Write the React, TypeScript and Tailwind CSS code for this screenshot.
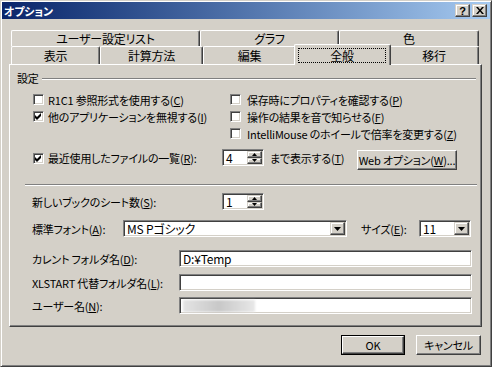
import React from "react";

const sunken =
  "border border-t-[#808080] border-l-[#808080] border-b-white border-r-white shadow-[inset_1px_1px_0_#404040,inset_-1px_-1px_0_#d4d0c8]";
const raised =
  "border border-t-white border-l-white border-b-[#404040] border-r-[#404040] shadow-[inset_-1px_-1px_0_#808080,inset_1px_1px_0_#d4d0c8]";
const raisedSmall =
  "border border-t-[#d4d0c8] border-l-[#d4d0c8] border-b-[#404040] border-r-[#404040] shadow-[inset_-1px_-1px_0_#808080,inset_1px_1px_0_#ffffff]";

function Check({ checked }: { checked?: boolean }) {
  return (
    <div className={`w-[11px] h-[11px] bg-white ${sunken} flex items-center justify-center shrink-0`}>
      {checked && (
        <svg width="7" height="7" viewBox="0 0 7 7">
          <path d="M0 2 L2 4 L6 0 L6 3 L2 7 L0 5 Z" fill="black" />
        </svg>
      )}
    </div>
  );
}

function Up() {
  return (
    <svg width="5" height="3" viewBox="0 0 5 3">
      <path d="M2.5 0 L5 3 L0 3 Z" fill="black" />
    </svg>
  );
}
function Down() {
  return (
    <svg width="5" height="3" viewBox="0 0 5 3">
      <path d="M0 0 L5 0 L2.5 3 Z" fill="black" />
    </svg>
  );
}
function DownBig() {
  return (
    <svg width="7" height="4" viewBox="0 0 7 4">
      <path d="M0 0 L7 0 L3.5 4 Z" fill="black" />
    </svg>
  );
}

function Spin({ value }: { value: string }) {
  return (
    <div className={`w-[42px] h-[17px] bg-white ${sunken} flex items-stretch p-[1px] shrink-0`}>
      <span className="flex-1 pl-[2px] leading-[13px] text-[12px]">{value}</span>
      <div className="w-[15px] flex flex-col">
        <div className={`flex-1 bg-[#d4d0c8] ${raisedSmall} flex items-center justify-center`}>
          <Up />
        </div>
        <div className={`flex-1 bg-[#d4d0c8] ${raisedSmall} flex items-center justify-center`}>
          <Down />
        </div>
      </div>
    </div>
  );
}

function Combo({ value, w }: { value: string; w: string }) {
  return (
    <div className={`${w} h-[17px] bg-white ${sunken} flex items-stretch p-[1px] shrink-0`}>
      <span className="flex-1 pl-[2px] leading-[13px] whitespace-nowrap text-[12px]">{value}</span>
      <div className={`w-[15px] bg-[#d4d0c8] ${raisedSmall} flex items-center justify-center`}>
        <DownBig />
      </div>
    </div>
  );
}

function Field({ children }: { children?: React.ReactNode }) {
  return (
    <div className={`w-[293px] h-[17px] bg-white ${sunken} flex items-center pl-[3px] shrink-0 text-[12px]`}>
      {children}
    </div>
  );
}

function K({ k }: { k: string }) {
  return (
    <>
      (<span className="underline underline-offset-1">{k}</span>)
    </>
  );
}

function Tab({ w, label }: { w: string; label: string }) {
  return (
    <div
      className={`${w} h-full border-t border-l border-t-white border-l-white border-r border-r-[#404040] shadow-[inset_-1px_0_0_#808080] rounded-tl-[2px] rounded-tr-[2px] flex items-center justify-center`}
    >
      {label}
    </div>
  );
}

export default function App() {
  return (
    <div className="w-[492px] h-[367px] bg-[#d4d0c8] border border-t-[#d4d0c8] border-l-[#d4d0c8] border-b-[#404040] border-r-[#404040] shadow-[inset_1px_1px_0_#ffffff,inset_-1px_-1px_0_#808080] p-[1px] flex flex-col text-black text-[11px] tracking-[-0.2px] leading-[14px] font-['Noto_Sans_CJK_JP','Noto_Sans',sans-serif] [font-feature-settings:'palt']">
      {/* title bar */}
      <div className="h-[17px] bg-gradient-to-r from-[#0a246a] to-[#a6caf0] flex items-center pl-[2px] pr-[3px]">
        <span className="text-white font-bold text-[11px]">オプション</span>
        <div className="ml-auto flex gap-[2px]">
          <div className={`w-[15px] h-[13px] bg-[#d4d0c8] ${raisedSmall} flex items-center justify-center font-bold text-[11px] tracking-normal font-['Liberation_Sans',sans-serif]`}>
            ?
          </div>
          <div className={`w-[15px] h-[13px] bg-[#d4d0c8] ${raisedSmall} flex items-center justify-center`}>
            <svg width="8" height="7" viewBox="0 0 8 7">
              <path d="M0 0 L2 0 L4 2.5 L6 0 L8 0 L5 3.5 L8 7 L6 7 L4 4.5 L2 7 L0 7 L3 3.5 Z" fill="black" />
            </svg>
          </div>
        </div>
      </div>

      {/* tabs */}
      <div className="mt-[11px] pl-[9px] flex flex-col text-[12px]">
        <div className="h-[16px] flex">
          <Tab w="w-[189px]" label="ユーザー設定リスト" />
          <Tab w="w-[139px]" label="グラフ" />
          <Tab w="w-[140px]" label="色" />
        </div>
        <div className="h-[18px] flex items-start">
          <Tab w="w-[89px]" label="表示" />
          <Tab w="w-[103px]" label="計算方法" />
          <Tab w="w-[93px]" label="編集" />
          <div className="relative z-10 w-[97px] h-[21px] -mx-[2px] -mt-[2px] -mb-[1px] bg-[#d4d0c8] border-t border-l border-t-white border-l-white border-r border-r-[#404040] shadow-[inset_-1px_0_0_#808080] rounded-tl-[2px] rounded-tr-[2px] flex p-[3px] pr-[4px] pb-[2px]">
            <div className="flex-1 border border-dotted border-black flex items-center justify-center">
              全般
            </div>
          </div>
          <Tab w="w-[90px]" label="移行" />
        </div>
      </div>

      {/* panel */}
      <div className={`ml-[7px] w-[473px] h-[263px] ${raised} flex flex-col`}>
        <div className="mt-[6px] h-[14px] flex items-center">
          <span className="ml-[7px]">設定</span>
          <div className="flex-1 ml-[3px] mr-[5px] mt-[2px] h-[2px] border-t border-t-[#808080] border-b border-b-white" />
        </div>

        <div className="mt-[6px] pl-[23px] grid grid-cols-[197px_1fr] auto-rows-[17px]">
          <div className="flex items-center gap-[4px]">
            <Check />
            <span>
              R1C1 参照形式を使用する<K k="C" />
            </span>
          </div>
          <div className="flex items-center gap-[6px]">
            <Check />
            <span>
              保存時にプロパティを確認する<K k="P" />
            </span>
          </div>
          <div className="flex items-center gap-[4px]">
            <Check checked />
            <span>
              他のアプリケーションを無視する<K k="I" />
            </span>
          </div>
          <div className="flex items-center gap-[6px]">
            <Check />
            <span>
              操作の結果を音で知らせる<K k="F" />
            </span>
          </div>
          <div />
          <div className="flex items-center gap-[6px]">
            <Check />
            <span className="whitespace-nowrap">
              IntelliMouse のホイールで倍率を変更する<K k="Z" />
            </span>
          </div>
        </div>

        <div className="mt-[7px] pl-[23px] h-[21px] flex items-start">
          <div className="w-[189px] h-[18px] flex items-center gap-[4px]">
            <Check checked />
            <span className="whitespace-nowrap">
              最近使用したファイルの一覧<K k="R" />:
            </span>
          </div>
          <Spin value="4" />
          <div className="w-[93px] h-[18px] flex items-center pl-[6px] whitespace-nowrap">
            まで表示する<K k="T" />
          </div>
          <div className={`mt-[1px] w-[100px] h-[20px] ${raised} flex items-center justify-center whitespace-nowrap`}>
            Web オプション<K k="W" />...
          </div>
        </div>

        <div className="mt-[14px] ml-[15px] mr-[4px] h-[2px] border-t border-t-[#808080] border-b border-b-white" />

        <div className="mt-[7px] pl-[22px] h-[17px] flex items-center">
          <div className="w-[190px] whitespace-nowrap">
            新しいブックのシート数<K k="S" />:
          </div>
          <Spin value="1" />
        </div>

        <div className="mt-[10px] pl-[22px] h-[17px] flex items-center">
          <div className="w-[91px] whitespace-nowrap">
            標準フォント<K k="A" />:
          </div>
          <Combo value="MS Pゴシック" w="w-[224px]" />
          <div className="ml-[14px] w-[58px] whitespace-nowrap">
            サイズ<K k="E" />:
          </div>
          <Combo value="11" w="w-[52px]" />
        </div>

        <div className="mt-[13px] pl-[22px] h-[17px] flex items-center">
          <div className="w-[147px] whitespace-nowrap">
            カレント フォルダ名<K k="D" />:
          </div>
          <Field>D:¥Temp</Field>
        </div>

        <div className="mt-[7px] pl-[22px] h-[17px] flex items-center">
          <div className="w-[147px] whitespace-nowrap">
            XLSTART 代替フォルダ名<K k="L" />:
          </div>
          <Field />
        </div>

        <div className="mt-[6px] pl-[22px] h-[17px] flex items-center">
          <div className="w-[147px] whitespace-nowrap">
            ユーザー名<K k="N" />:
          </div>
          <Field>
            <div className="w-[72px] h-[12px] bg-gradient-to-r from-[#e4e4e4] via-[#c8c8c8] to-[#e8e8e8] blur-[1px]" />
          </Field>
        </div>
      </div>

      {/* buttons */}
      <div className="mt-[8px] pr-[9px] flex justify-end gap-[11px]">
        <div className="w-[64px] h-[20px] border border-black">
          <div className={`w-full h-full ${raised} flex items-center justify-center`}>OK</div>
        </div>
        <div className={`w-[65px] h-[20px] ${raised} flex items-center justify-center`}>キャンセル</div>
      </div>
    </div>
  );
}
